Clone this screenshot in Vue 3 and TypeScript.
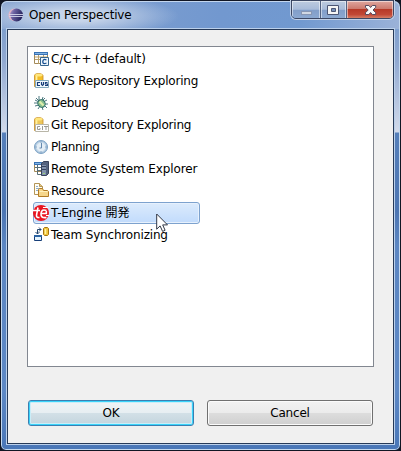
<script setup lang="ts">
import { ref } from 'vue'

interface Perspective {
  id: string
  label: string
  spacing: number
}

const perspectives: Perspective[] = [
  { id: 'cpp', label: 'C/C++ (default)', spacing: -0.1 },
  { id: 'cvs', label: 'CVS Repository Exploring', spacing: -0.21 },
  { id: 'debug', label: 'Debug', spacing: -0.4 },
  { id: 'git', label: 'Git Repository Exploring', spacing: -0.21 },
  { id: 'planning', label: 'Planning', spacing: -0.4 },
  { id: 'remote', label: 'Remote System Explorer', spacing: -0.1 },
  { id: 'resource', label: 'Resource', spacing: -0.25 },
  { id: 'tengine', label: 'T-Engine 開発', spacing: -0.1 },
  { id: 'team', label: 'Team Synchronizing', spacing: -0.17 },
]

const selected = ref('tengine')
</script>

<template>
  <div class="desktop">
    <div class="window">
      <header class="titlebar">
        <svg class="logo" width="16" height="16" viewBox="0 0 16 16">
          <defs>
            <linearGradient id="orb" x1="0" x2="1" y1="0" y2="0.4">
              <stop offset="0" stop-color="#b9a5cf" />
              <stop offset="0.35" stop-color="#6d62a2" />
              <stop offset="1" stop-color="#25235c" />
            </linearGradient>
          </defs>
          <path d="M7 1.5C3 1.5.5 4.5.5 8s2.500 6 6.500 6z" fill="#e5b3c4" />
          <circle cx="8.5" cy="8" r="6.400" fill="url(#orb)" />
          <path d="M1 7.500h14M1 9.500h14" stroke="#d5d6ec" stroke-width="0.9" />
        </svg>
        <h1>Open Perspective</h1>
        <div class="captions">
          <button class="cap minimize">
            <svg width="28" height="18" viewBox="0 0 28 18"><rect x="9.5" y="10.5" width="10" height="3" fill="#d1d8e3" stroke="#8796b3" /></svg>
          </button>
          <button class="cap maximize">
            <svg width="25" height="18" viewBox="0 0 25 18">
              <path d="M6.5 4.5h11v9h-11z" fill="#f5f5f5" stroke="#4c5674" />
              <path d="M10.500 7.500h4v3h-4z" fill="#7891bb" stroke="#4c5674" />
            </svg>
          </button>
          <button class="cap close">
            <svg width="46" height="18" viewBox="0 0 46 18">
              <path d="M18.5 4.5h3.400l1.700 2 1.700-2h3.400v1.800L26 9l2.700 2.700v1.800h-3.400l-1.700-2-1.700 2h-3.400v-1.800l2.700-2.700-2.700-2.700z" fill="#fafafa" stroke="#554a5f" />
            </svg>
          </button>
        </div>
      </header>

      <main class="client">
        <ul class="list">
          <li
            v-for="p in perspectives"
            :key="p.id"
            :class="{ selected: p.id === selected }"
            @click="selected = p.id"
          >
            <svg :class="['icon', p.id]" width="16" height="16" viewBox="0 0 16 16">
              <g v-if="p.id === 'cpp'">
                <path d="M.5 1.500h13v11H.5z" fill="#fff" stroke="#a48a58" />
                <path d="M0 1h14v3H0z" fill="#3972b4" />
                <path d="M1 2h12v1H1z" fill="#82b4e4" />
                <path d="M4.500 4v9M9.500 4v3M1 8.500h6M1 6h12" stroke="#b9a06c" />
                <path d="M6.500 6.500h8v8h-8z" fill="#edf5fc" stroke="#34648f" />
                <path d="M12.500 9Q9 7.300 8.800 10.500t3.700 1.500" fill="none" stroke="#174f91" stroke-width="1.300" />
              </g>
              <g v-else-if="p.id === 'cvs' || p.id === 'git'">
                <path d="M.5 2.500Q.5.5 4.500.5t4.500 2v11H.5z" :fill="p.id === 'cvs' ? '#f3bd27' : '#edc75b'" stroke="#c88c26" stroke-width=".8" />
                <path d="M2.500 3v9" stroke="#fff0a1" stroke-width="1.800" />
                <ellipse cx="4.800" cy="2.200" rx="3.600" ry="1.400" fill="#ffe67c" />
                <path d="M1.500 7.500h13v7h-13z" :fill="p.id === 'cvs' ? '#f3fbff' : '#fff'" :stroke="p.id === 'cvs' ? '#83a9bd' : '#b9b6a8'" />
                <path v-if="p.id === 'cvs'" d="M6 9.500H3.500v3H6M7.500 9v2.500l1 1 1-1V9M13.500 9.500h-2V11h2v1.500H11" fill="none" stroke="#173d79" stroke-width="1.200" />
                <path v-else d="M6 9.500H3.500v3H6V11M8.500 9v4M10 9.500h4M12 9.500V13" fill="none" stroke="#9b9a96" />
              </g>
              <g v-else-if="p.id === 'debug'">
                <path d="M5 1v4M9 2L8 5M1 5l4 2M0 8h4M1 11l4-1M4 14l2-3M9 15l-1-3M13 5l-4 2M14 9h-4M13 13l-3-3M2 3l4 4M11 3L8 6" stroke="#386a72" stroke-width=".9" />
                <ellipse cx="7.500" cy="8.500" rx="3.500" ry="4" fill="#8bbf90" stroke="#2c6c66" transform="rotate(-35 7.500 8.500)" />
                <path d="M5.500 6.500l4 4" stroke="#e0efad" stroke-width="2" />
              </g>
              <g v-else-if="p.id === 'planning'">
                <circle cx="7" cy="8" r="6.500" fill="#a9c5de" stroke="#7da2c4" />
                <circle cx="7" cy="8" r="4.800" fill="#e4eef6" stroke="#c6d9e9" />
                <path d="M7.500 4v5H5.500M7 2.500v1M1.500 8h1M11.500 8h1M7 12.500v1" fill="none" stroke="#6489af" />
              </g>
              <g v-else-if="p.id === 'remote'">
                <path d="M.5 1.500h7v9h-7z" fill="#fff" stroke="#a48a58" />
                <path d="M0 1h8v3H0z" fill="#3972b4" />
                <path d="M1 2h6v1H1z" fill="#82b4e4" />
                <path d="M3.500 4v9.500H8M1 6.500h6M3 9.500h5" fill="none" stroke="#596f78" />
                <path d="M7.500 2.500l2-2h5v12l-2 2h-5z" fill="#53627e" stroke="#39435b" />
                <path d="M8 4h4v10H8z" fill="#8292ac" />
                <path d="M8 5.500h4M8 8.500h4" stroke="#34425e" />
                <path d="M9 12.500h2" stroke="#9ed17d" />
              </g>
              <g v-else-if="p.id === 'resource'">
                <path d="M.5.5h5l3 3v8h-8z" fill="#fffdf3" stroke="#b49557" />
                <path d="M5.500.5v3h3" fill="#e2c783" stroke="#b49557" />
                <path d="M2 3.500h2M2 5.500h4M2 7.500h2" stroke="#8daccb" />
                <path d="M4.500 13.500v-7l1-1h3l1 2h4l1 1v5z" fill="#f6d68b" stroke="#b27b25" />
                <path d="M5.500 8.500h8" stroke="#fff1bc" />
              </g>
              <g v-else-if="p.id === 'tengine'">
                <circle cx="8" cy="8" r="8" fill="#e91520" />
                <path d="M0 5.500h7M5 2.500L3.500 10q-.3 3 3 2.500M13.500 5.500Q8.500 3.500 8 8.500t5.500 4M8.300 8.500h5V6" fill="none" stroke="#fff" stroke-width="1.600" />
                <path d="M10 2.500h5M13 10.500h3" stroke="#fff" />
              </g>
              <g v-else>
                <path d="M3.500 7V2.500H7M5 .5l2 2-2 2M1.500 5l2 2 2-2" fill="none" stroke="#23476f" />
                <path d="M.5 8.500h7v5h-7z" fill="#e6f5ff" stroke="#173e78" />
                <path d="M0 8h8v2H0z" fill="#2c64a4" />
                <path d="M9.500 1.500l1-1h3l1 1v6l-1 1h-3l-1-1z" fill="#efc53c" stroke="#a67412" />
                <path d="M11.500 2v5" stroke="#fff1a2" stroke-width="1.500" />
              </g>
            </svg>
            <span :style="{ letterSpacing: p.spacing + 'px' }">{{ p.label }}</span>
          </li>
        </ul>

        <footer class="actions">
          <button class="action primary">OK</button>
          <button class="action">Cancel</button>
        </footer>
      </main>
    </div>

    <svg class="cursor" width="13" height="20" viewBox="0 0 13 20">
      <path d="M.7 1v15.200l3.400-3.300 2.500 5.500 2.500-1.100-2.400-5.400h4.800z" fill="#fff" stroke="#303745" />
    </svg>
  </div>
</template>

<style>
body {
  margin: 0;
}
</style>

<style scoped>
* {
  box-sizing: border-box;
}

.desktop {
  position: relative;
  width: 401px;
  height: 451px;
  background: #111624;
  font-family: "DejaVu Sans", "Noto Sans CJK JP", sans-serif;
  font-size: 12px;
  color: #000;
  overflow: hidden;
}

.window {
  display: flex;
  flex-direction: column;
  width: 401px;
  height: 451px;
  padding: 0 6px 6px;
  border: 1px solid #111624;
  border-radius: 7px 7px 6px 6px;
  box-shadow: inset 0 0 0 1px #c4d8ee;
  background: linear-gradient(#8faad5 0, #7f9fcd 28px, #91a9d1 60px, #d2daea 131px, #557fba 132px, #4c75b2 210px, #5c86c2 245px, #5d88c5 390px, #4976b7 100%);
}

.titlebar {
  display: flex;
  flex: none;
  height: 28px;
  margin: 0 -5px;
  padding-left: 8px;
  background: radial-gradient(ellipse 105px 21px at 72px 14px, #c6d4e9 25%, #c6d4e900 100%), linear-gradient(100deg, #86a3d0, #7298cf 55%, #7199d0 75%, #9bb2d8);
  border-top: 1px solid #c3d6ee;
  border-radius: 6px 6px 0 0;
}

.logo {
  flex: none;
  margin-top: 5px;
  margin-left: -2px;
}

h1 {
  margin: 5px 0 0 5px;
  font-size: 12px;
  font-weight: 400;
  line-height: 16px;
  letter-spacing: -0.18px;
}

.captions {
  display: flex;
  width: 103px;
  height: 19px;
  margin: -2px 5px 0 auto;
  border: 1px solid #3d4864;
  border-radius: 0 0 5px 5px;
  box-shadow: 0 0 0 1px #c1d0e7;
  overflow: hidden;
}

.cap {
  display: block;
  flex: none;
  height: 18px;
  padding: 0;
  border: 0;
  box-shadow: inset 0 0 0 1px #ffffff80;
}

.cap svg {
  display: block;
}

.minimize,
.maximize {
  width: 29px;
  border-right: 1px solid #526281;
  background: linear-gradient(#bdcbdf 0, #a8bbd9 47%, #819dc8 48%, #8daad2 100%);
}

.maximize {
  width: 26px;
}

.close {
  width: 46px;
  background: linear-gradient(#dfa69f 0, #cb776b 46%, #b63928 47%, #c14836 75%, #d98d74 100%);
}

.client {
  display: flex;
  flex-direction: column;
  flex: 1;
  padding: 16px 19px 17px;
  border: 1px solid #263957;
  outline: 1px solid #bbd0eb;
  background: #f0f0f0;
}

.list {
  width: 347px;
  height: 321px;
  margin: 0;
  padding: 1px 0 0 5px;
  border: 1px solid #828790;
  background: #fff;
  list-style: none;
}

li {
  display: flex;
  align-items: center;
  width: 167px;
  height: 22px;
  line-height: 18px;
  white-space: nowrap;
  border: 1px solid transparent;
  border-radius: 3px;
}

li.selected {
  border-color: #7da2ce;
  box-shadow: inset 0 0 0 1px #e7f1fd;
  background: linear-gradient(#dcebfc, #c1dbfc);
}

.icon {
  flex: none;
  margin-right: 1px;
}

.icon.tengine {
  margin: 0 2px 0 -1px;
}

.actions {
  display: flex;
  gap: 13px;
  margin: 33px 0 0 1px;
}

.action {
  width: 166px;
  height: 26px;
  padding: 0 0 1px;
  border: 1px solid #707070;
  border-radius: 3px;
  box-shadow: inset 0 0 0 1px #fbfbfb;
  background: linear-gradient(#f2f2f2 0, #ebebeb 48%, #dddddd 49%, #cfcfcf 100%);
  font: inherit;
  color: inherit;
  letter-spacing: -0.2px;
}

.action.primary {
  border-color: #3c7fb1;
  box-shadow: inset 0 0 0 1px #39d3fa, inset 0 0 0 2px #c9edf8;
  background: linear-gradient(#f0f4f6 0, #e7eef2 48%, #d3e0e7 49%, #c3d4dd 100%);
}

.cursor {
  position: absolute;
  left: 156px;
  top: 213px;
}
</style>
